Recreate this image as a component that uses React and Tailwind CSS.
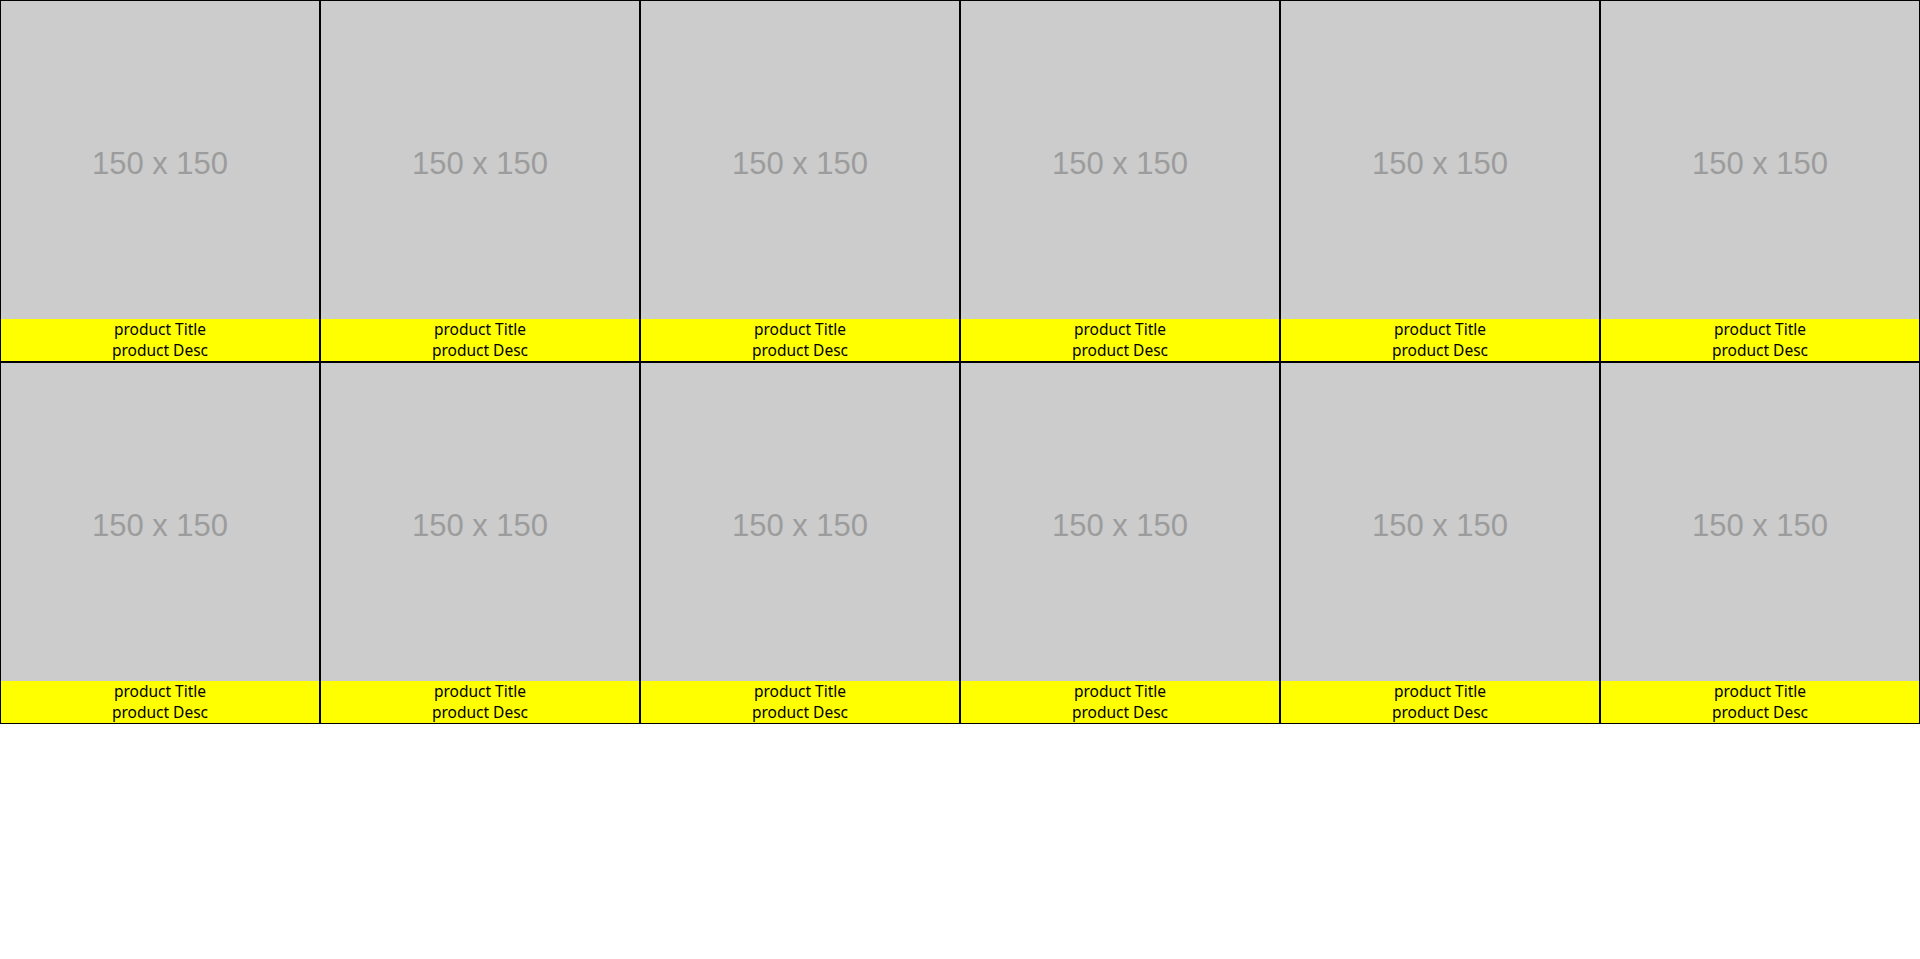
import React from "react";

const products = Array.from({ length: 12 }, (_, i) => ({
  id: i,
  title: "product Title",
  desc: "product Desc",
}));

function ProductCard({ product }) {
  return (
    <div className="border border-black flex flex-col">
      <div className="aspect-square w-full bg-[#cccccc] flex items-center justify-center pt-[8px]">
        <span className="text-[31px] text-[#9c9c9c] font-['Liberation_Sans',Arial,sans-serif]">
          150 x 150
        </span>
      </div>
      <div className="bg-[#ffff00] text-center text-black text-[15.5px] leading-[21px] font-['Noto_Sans',sans-serif]">
        <div>{product.title}</div>
        <div>{product.desc}</div>
      </div>
    </div>
  );
}

export default function App() {
  return (
    <div className="min-h-screen bg-white">
      <div className="grid grid-cols-6">
        {products.map((p) => (
          <ProductCard key={p.id} product={p} />
        ))}
      </div>
    </div>
  );
}
